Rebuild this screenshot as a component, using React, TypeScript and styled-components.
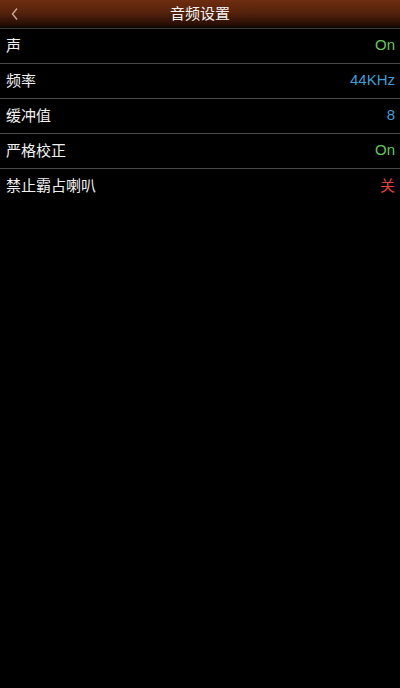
import React from 'react';
import styled, { createGlobalStyle } from 'styled-components';

const GlobalStyle = createGlobalStyle`
  html, body {
    margin: 0;
    padding: 0;
    background: #000;
  }
  body {
    font-family: "Noto Sans CJK SC", "Liberation Sans", sans-serif;
  }
`;

type Tone = 'green' | 'blue' | 'red';

const tones: Record<Tone, string> = {
  green: '#63c95f',
  blue: '#3e9fd6',
  red: '#e2403c',
};

const rows: { label: string; value: string; tone: Tone }[] = [
  { label: '声', value: 'On', tone: 'green' },
  { label: '频率', value: '44KHz', tone: 'blue' },
  { label: '缓冲值', value: '8', tone: 'blue' },
  { label: '严格校正', value: 'On', tone: 'green' },
  { label: '禁止霸占喇叭', value: '关', tone: 'red' },
];

const App = () => {
  return (
    <>
      <GlobalStyle />
      <Page>
        <Header>
          <BackButton>
            <svg width="10" height="14" viewBox="0 0 10 14">
              <path d="M7 1.5 L2.5 7 L7 12.5" fill="none" stroke="#c9a896" strokeWidth="1.4" />
            </svg>
          </BackButton>
          <Title>音频设置</Title>
        </Header>
        <List>
          {rows.map((r, i) => (
            <Row key={r.label} last={i === rows.length - 1}>
              <Label>{r.label}</Label>
              <Value tone={r.tone}>{r.value}</Value>
            </Row>
          ))}
        </List>
      </Page>
    </>
  );
};

const Page = styled.div`
  width: 400px;
  height: 688px;
  background: #000;
  display: flex;
  flex-direction: column;
`;

const Header = styled.div`
  height: 28px;
  position: relative;
  display: flex;
  align-items: center;
  justify-content: center;
  background: linear-gradient(#6e2d10 0%, #55220c 45%, #2a0f05 85%, #0c0401 100%);
  border-bottom: 1px solid #3a3a3a;
`;

// chevron sits over the header bar
const BackButton = styled.div`
  position: absolute;
  left: 10px;
  top: 7px;
  width: 10px;
  height: 14px;
  display: flex;
`;

const Title = styled.div`
  color: #f2f2f2;
  font-size: 15px;
  line-height: 28px;
  margin-top: -2px;
`;

const List = styled.div`
  display: flex;
  flex-direction: column;
`;

const Row = styled.div<{ last?: boolean }>`
  height: 31px;
  display: flex;
  align-items: center;
  justify-content: space-between;
  padding: 0 5px 3px 6px;
  border-bottom: ${(p) => (p.last ? 'none' : '1px solid #4a4a4a')};
`;

const Label = styled.div`
  color: #f0f0f0;
  font-size: 15px;
`;

const Value = styled.div<{ tone: Tone }>`
  color: ${(p) => tones[p.tone]};
  font-size: 15px;
  font-family: "Liberation Sans", "Noto Sans CJK SC", sans-serif;
`;

export default App;
